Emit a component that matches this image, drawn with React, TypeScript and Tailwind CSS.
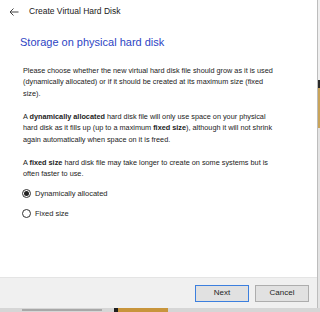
import React from "react";

const body = { fontFamily: '"Liberation Sans", Arial, sans-serif' };

function Radio({ checked, label }: { checked?: boolean; label: string }) {
  return (
    <label className="flex items-center gap-[4px] text-[7.5px] text-[#1e1e1e]">
      <span className="flex h-[9px] w-[9px] items-center justify-center rounded-full border border-[#333] bg-white">
        {checked && <span className="h-[5px] w-[5px] rounded-full bg-[#222]" />}
      </span>
      {label}
    </label>
  );
}

export default function App() {
  return (
    <div className="flex h-[312px] w-[320px] flex-col overflow-hidden bg-[#d6d6d6]" style={body}>
      <div className="flex h-[308px]">
        <div className="flex w-[318px] flex-col border-r border-[#bdbdbd] bg-white">
          <div className="flex h-[21px] items-center pl-[9px] pt-[2px]">
            <svg width="10" height="8" viewBox="0 0 10 8" className="text-[#444]">
              <path d="M9.5 4H1M4.5 0.5L1 4l3.5 3.5" fill="none" stroke="currentColor" strokeWidth="1" />
            </svg>
            <span className="ml-[10px] text-[8.5px] text-[#1a1a1a]">Create Virtual Hard Disk</span>
          </div>

          <div className="mt-[13px] pl-[20px] text-[11px] text-[#2d45c4]">Storage on physical hard disk</div>

          <div className="mt-[14px] flex flex-col gap-[11.5px] whitespace-nowrap pl-[23px] text-[7.3px] leading-[11.5px] text-[#222]">
            <p>
              Please choose whether the new virtual hard disk file should grow as it is used
              <br />
              (dynamically allocated) or if it should be created at its maximum size (fixed
              <br />
              size).
            </p>
            <p>
              A <b>dynamically allocated</b> hard disk file will only use space on your physical
              <br />
              hard disk as it fills up (up to a maximum <b>fixed size</b>), although it will not shrink
              <br />
              again automatically when space on it is freed.
            </p>
            <p>
              A <b>fixed size</b> hard disk file may take longer to create on some systems but is
              <br />
              often faster to use.
            </p>
          </div>

          <div className="mt-[8px] flex flex-col gap-[9px] pl-[22px]">
            <Radio checked label="Dynamically allocated" />
            <Radio label="Fixed size" />
          </div>

          <div className="mt-auto flex h-[31px] items-center justify-end gap-[6px] border-t border-[#e4e4e4] bg-[#f0f0f0] pr-[8px]">
            <button className="h-[17px] w-[54px] border border-[#3c7fde] bg-[#e1e1e1] text-[8px] text-[#1e1e1e]">Next</button>
            <button className="h-[17px] w-[54px] border border-[#adadad] bg-[#e1e1e1] text-[8px] text-[#1e1e1e]">Cancel</button>
          </div>
        </div>
        <div className="flex w-[2px] flex-col">
          <div className="h-[80px] bg-[#efefef]" />
          <div className="h-[8px] bg-[#2a2a2a]" />
          <div className="h-[40px] bg-[#c9a45a]" />
          <div className="flex-1 bg-[#e3e3e3]" />
        </div>
      </div>
      <div className="flex h-[4px] items-center">
        <div className="w-[22px]" />
        <div className="h-[2px] w-[80px] bg-[#a8a8a8]" />
        <div className="ml-[12px] h-[4px] w-[4px] bg-[#1f1f1f]" />
        <div className="h-[4px] w-[50px] bg-[#c8953c]" />
      </div>
    </div>
  );
}
